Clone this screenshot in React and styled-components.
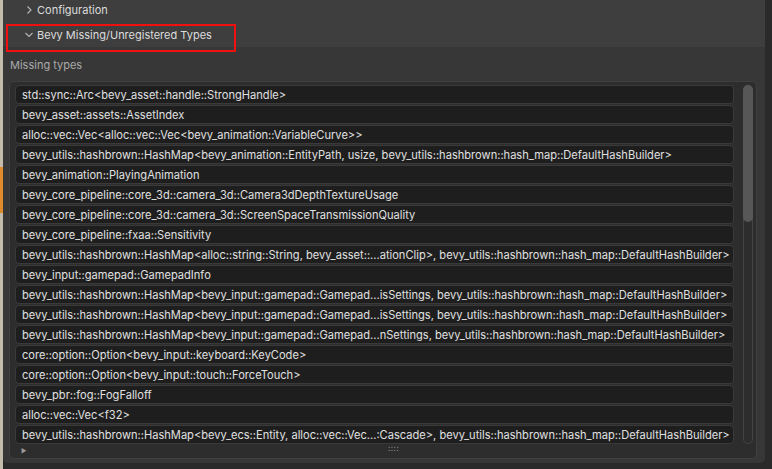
import React from "react";
import styled, { createGlobalStyle } from "styled-components";

const GlobalStyle = createGlobalStyle`
  html, body {
    margin: 0;
    padding: 0;
    background: #2a2a2a;
    overflow: hidden;
  }
  body {
    font-family: Inter, "Noto Sans", "DejaVu Sans", sans-serif;
  }
`;

const missingTypes = [
  "std::sync::Arc<bevy_asset::handle::StrongHandle>",
  "bevy_asset::assets::AssetIndex",
  "alloc::vec::Vec<alloc::vec::Vec<bevy_animation::VariableCurve>>",
  "bevy_utils::hashbrown::HashMap<bevy_animation::EntityPath, usize, bevy_utils::hashbrown::hash_map::DefaultHashBuilder>",
  "bevy_animation::PlayingAnimation",
  "bevy_core_pipeline::core_3d::camera_3d::Camera3dDepthTextureUsage",
  "bevy_core_pipeline::core_3d::camera_3d::ScreenSpaceTransmissionQuality",
  "bevy_core_pipeline::fxaa::Sensitivity",
  "bevy_utils::hashbrown::HashMap<alloc::string::String, bevy_asset::...ationClip>, bevy_utils::hashbrown::hash_map::DefaultHashBuilder>",
  "bevy_input::gamepad::GamepadInfo",
  "bevy_utils::hashbrown::HashMap<bevy_input::gamepad::Gamepad...isSettings, bevy_utils::hashbrown::hash_map::DefaultHashBuilder>",
  "bevy_utils::hashbrown::HashMap<bevy_input::gamepad::Gamepad...isSettings, bevy_utils::hashbrown::hash_map::DefaultHashBuilder>",
  "bevy_utils::hashbrown::HashMap<bevy_input::gamepad::Gamepad...nSettings, bevy_utils::hashbrown::hash_map::DefaultHashBuilder>",
  "core::option::Option<bevy_input::keyboard::KeyCode>",
  "core::option::Option<bevy_input::touch::ForceTouch>",
  "bevy_pbr::fog::FogFalloff",
  "alloc::vec::Vec<f32>",
  "bevy_utils::hashbrown::HashMap<bevy_ecs::Entity, alloc::vec::Vec...:Cascade>, bevy_utils::hashbrown::hash_map::DefaultHashBuilder>",
];

const Chevron = ({ open }) => (
  <svg width="10" height="10" viewBox="0 0 10 10">
    {open ? (
      <path d="M1.5 3 L5 6.5 L8.5 3" fill="none" stroke="#b8b8b8" strokeWidth="1.1" />
    ) : (
      <path d="M3.5 1.5 L7 5 L3.5 8.5" fill="none" stroke="#b8b8b8" strokeWidth="1.1" />
    )}
  </svg>
);

export default function App() {
  return (
    <>
      <GlobalStyle />
      <Page>
        <EdgeStrip />
        <Panel>
          <Headers>
            <HeaderRow $height={21} $shift={2}>
              <Chevron />
              <HeaderLabel>Configuration</HeaderLabel>
            </HeaderRow>
            <HeaderRow $height={26} $shift={-2}>
              <Chevron open />
              <HeaderLabel>Bevy Missing/Unregistered Types</HeaderLabel>
            </HeaderRow>
            <Highlight />
          </Headers>
          <Body>
            <SectionLabel>Missing types</SectionLabel>
            <ListBox>
              <ListInner>
                <Rows>
                  {missingTypes.map((t, i) => (
                    <Row key={i}>{t}</Row>
                  ))}
                </Rows>
                <ScrollTrack>
                  <ScrollThumb />
                </ScrollTrack>
              </ListInner>
              <ListFooter>
                <Triangle>▶</Triangle>
                <Grip>::::</Grip>
              </ListFooter>
            </ListBox>
          </Body>
        </Panel>
      </Page>
    </>
  );
}

const Page = styled.div`
  display: grid;
  grid-template-columns: 3px 762px 7px;
  width: 772px;
  height: 469px;
  background: #2a2a2a;
`;

const EdgeStrip = styled.div`
  background: linear-gradient(
    to bottom,
    #c4bcaa 0px,
    #c4bcaa 167px,
    #e08a2c 167px,
    #e08a2c 213px,
    #c4bcaa 213px
  );
`;

const Panel = styled.div`
  display: flex;
  flex-direction: column;
  height: 463px;
  background: #373737;
  border-radius: 0 0 5px 5px;
  overflow: hidden;
`;

const Headers = styled.div`
  position: relative;
  display: flex;
  flex-direction: column;
  background: #3e3e3e;
`;

const HeaderRow = styled.div`
  display: flex;
  align-items: center;
  gap: 3px;
  height: ${(p) => p.$height}px;
  padding-left: 21px;
  box-sizing: border-box;
  padding-bottom: ${(p) => (p.$shift > 0 ? p.$shift : 0)}px;
  padding-top: ${(p) => (p.$shift < 0 ? -p.$shift : 0)}px;
`;

const HeaderLabel = styled.span`
  color: #dcdcdc;
  font-size: 11px;
`;

const Highlight = styled.div`
  position: absolute;
  left: 3px;
  top: 24px;
  width: 226px;
  height: 24px;
  border: 2px solid #f01010;
  pointer-events: none;
`;

const Body = styled.div`
  display: flex;
  flex-direction: column;
  padding: 10px 8px 0 6px;
`;

const SectionLabel = styled.div`
  color: #a9a9a9;
  font-size: 11px;
  height: 24px;
  line-height: 16px;
  padding-left: 1px;
`;

const ListBox = styled.div`
  display: flex;
  flex-direction: column;
  height: 378px;
  box-sizing: border-box;
  background: #2d2d2d;
  border: 1px solid #3f3f3f;
  border-radius: 5px;
`;

const ListInner = styled.div`
  display: flex;
  gap: 9px;
  padding: 3px 0 0 5px;
`;

const Rows = styled.div`
  display: flex;
  flex-direction: column;
  gap: 1px;
  width: 719px;
`;

const Row = styled.div`
  height: 19px;
  box-sizing: border-box;
  padding-left: 6px;
  background: #1e1e1e;
  border: 1px solid #3a3a3a;
  border-radius: 4px;
  color: #e0e0e0;
  font-size: 11.1px;
  line-height: 19px;
  white-space: nowrap;
  overflow: hidden;
`;

const ScrollTrack = styled.div`
  width: 10px;
  height: 359px;
  box-sizing: border-box;
  border: 1px solid #444444;
  border-radius: 5px;
`;

const ScrollThumb = styled.div`
  height: 137px;
  margin: -1px;
  background: #575757;
  border-radius: 5px;
`;

const ListFooter = styled.div`
  position: relative;
  display: flex;
  align-items: center;
  height: 12px;
  padding-left: 11px;
`;

const Triangle = styled.span`
  color: #9a9a9a;
  font-size: 6px;
`;

const Grip = styled.span`
  position: absolute;
  left: 378px;
  top: -1px;
  color: #a0a0a0;
  font-size: 8px;
  letter-spacing: 0.5px;
`;
